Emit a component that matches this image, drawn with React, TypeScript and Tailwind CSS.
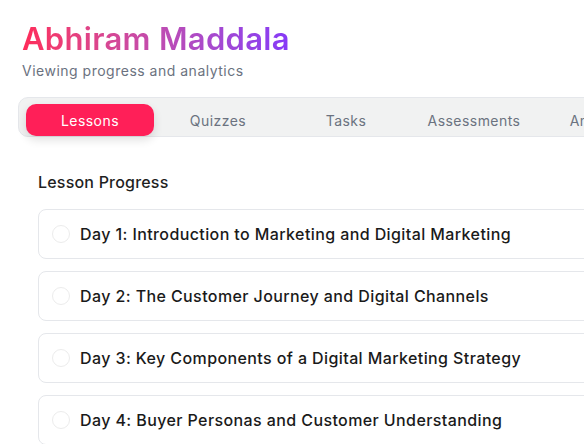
import { useState } from "react";

const tabs = ["Lessons", "Quizzes", "Tasks", "Assessments", "Analytics"];

const lessons = [
  "Day 1: Introduction to Marketing and Digital Marketing",
  "Day 2: The Customer Journey and Digital Channels",
  "Day 3: Key Components of a Digital Marketing Strategy",
  "Day 4: Buyer Personas and Customer Understanding",
  "Day 5: Market Research and Competitor Analysis",
];

export default function App() {
  const [active, setActive] = useState("Lessons");

  return (
    <div
      className="h-[444px] w-full overflow-hidden bg-white"
      style={{ fontFamily: "Inter, \"Open Sans\", sans-serif" }}
    >
      <div className="w-[820px] px-[18px] pt-[19px]">
        {/* Header */}
        <div className="pl-[4px]">
          <h1 className="w-fit bg-gradient-to-r from-[#ff2a58] to-[#8638f8] bg-clip-text text-[31px] leading-[39px] font-semibold tracking-[0.3px] text-transparent">
            Abhiram Maddala
          </h1>
          <p className="mt-[3px] text-[14px] leading-[20px] tracking-[0.5px] text-[#6b7280]">
            Viewing progress and analytics
          </p>
        </div>

        {/* Tabs */}
        <div className="mt-[16px] flex h-[40px] rounded-l-[10px] border border-[#e5e7eb] bg-[#f1f2f2] pl-[7px] pt-[6px]">
          {tabs.map((tab) => (
            <button
              key={tab}
              onClick={() => setActive(tab)}
              className={`h-[32px] w-[128px] shrink-0 rounded-[10px] text-[14px] tracking-[0.45px] ${
                active === tab
                  ? "bg-[#ff1f58] text-white shadow-[0_4px_10px_rgba(0,0,0,0.12)]"
                  : "text-[#6b7280]"
              }`}
            >
              {tab}
            </button>
          ))}
        </div>

        {/* Lesson list */}
        <div className="px-[20px] pt-[33px]">
          <h2 className="text-[16px] leading-[24px] font-medium tracking-[0.2px] text-[#1f1f1f]">
            Lesson Progress
          </h2>
          <div className="mt-[15px] flex flex-col gap-[12px]">
            {lessons.map((lesson) => (
              <div
                key={lesson}
                className="flex h-[50px] items-center gap-[10px] rounded-[8px] border border-[#e5e7eb] px-[13px]"
              >
                <span className="h-[18px] w-[18px] shrink-0 rounded-full border-[1.5px] border-[#ececec]" />
                <span className="text-[16px] font-medium tracking-[0.4px] text-[#1a1a1a]">
                  {lesson}
                </span>
              </div>
            ))}
          </div>
        </div>
      </div>
    </div>
  );
}
